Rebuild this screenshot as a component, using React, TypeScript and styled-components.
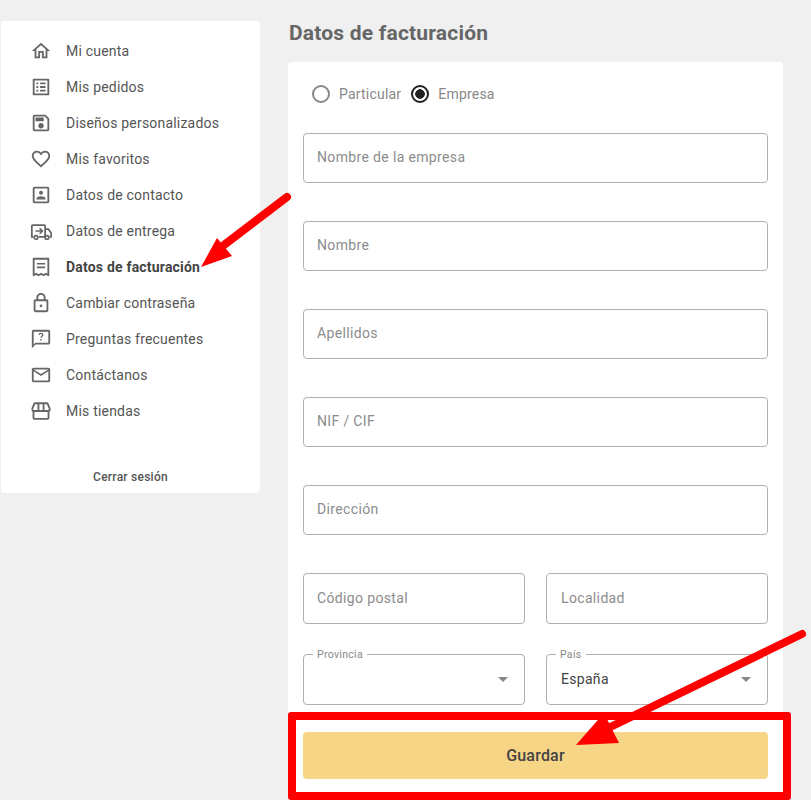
import React from "react";
import styled, { createGlobalStyle } from "styled-components";

const icons: Record<string, React.ReactNode> = {
  home: <path d="M12 5.69l5 4.5V18h-2v-6H9v6H7v-7.81l5-4.5M12 3L2 12h3v8h6v-6h2v6h6v-8h3L12 3z" />,
  orders: (
    <path d="M11 7h6v2h-6zm0 4h6v2h-6zm0 4h6v2h-6zM7 7h2v2H7zm0 4h2v2H7zm0 4h2v2H7zM20.1 3H3.9c-.5 0-.9.4-.9.9v16.2c0 .4.4.9.9.9h16.2c.4 0 .9-.5.9-.9V3.9c0-.5-.5-.9-.9-.9zM19 19H5V5h14v14z" />
  ),
  save: (
    <path d="M17 3H5c-1.11 0-2 .9-2 2v14c0 1.1.89 2 2 2h14c1.1 0 2-.9 2-2V7l-4-4zm2 16H5V5h11.17L19 7.83V19zm-7-7c-1.66 0-3 1.34-3 3s1.34 3 3 3 3-1.34 3-3-1.34-3-3-3zM6 6h9v4H6z" />
  ),
  heart: (
    <path d="M16.5 3c-1.74 0-3.41.81-4.5 2.09C10.91 3.81 9.24 3 7.5 3 4.42 3 2 5.42 2 8.5c0 3.78 3.4 6.86 8.55 11.54L12 21.35l1.45-1.32C18.6 15.36 22 12.28 22 8.5 22 5.42 19.58 3 16.5 3zm-4.4 15.55l-.1.1-.1-.1C7.14 14.24 4 11.39 4 8.5 4 6.5 5.5 5 7.5 5c1.54 0 3.04.99 3.57 2.36h1.87C13.46 5.99 14.96 5 16.5 5c2 0 3.5 1.5 3.5 3.5 0 2.89-3.14 5.74-7.9 10.05z" />
  ),
  contact: (
    <>
      <path d="M19 5v14H5V5h14m0-2H5c-1.11 0-2 .9-2 2v14c0 1.1.89 2 2 2h14c1.1 0 2-.9 2-2V5c0-1.1-.9-2-2-2z" />
      <circle cx="12" cy="9.500" r="2.200" />
      <path d="M7 17v-1c0-1.800 3.300-2.600 5-2.600s5 .8 5 2.600v1z" />
    </>
  ),
  truck: (
    <>
      <path d="M3.500 18.500H2V6.500a1 1 0 0 1 1-1h12.500a1 1 0 0 1 1 1v12H9.500M16.500 10h3.500l3 4v4.500h-1.500" fill="none" stroke="#666" strokeWidth="1.900" />
      <circle cx="6.500" cy="19" r="2" fill="none" stroke="#666" strokeWidth="1.800" />
      <circle cx="18.500" cy="19" r="2" fill="none" stroke="#666" strokeWidth="1.800" />
      <path d="M6 12h7.500M10.500 9l3 3-3 3" fill="none" stroke="#666" strokeWidth="1.800" />
    </>
  ),
  receipt: (
    <>
      <path d="M4 3h16v18l-2.700-1.600-2.600 1.600-2.700-1.600-2.700 1.600-2.600-1.600L4 21z" fill="none" stroke="#666" strokeWidth="2" strokeLinejoin="round" />
      <path d="M7.500 7.500h9v1.800h-9zM7.500 11.500h9v1.800h-9z" />
    </>
  ),
  lock: (
    <path d="M18 8h-1V6c0-2.760-2.240-5-5-5S7 3.240 7 6v2H6c-1.100 0-2 .9-2 2v10c0 1.100.9 2 2 2h12c1.100 0 2-.9 2-2V10c0-1.100-.9-2-2-2zM9 6c0-1.660 1.340-3 3-3s3 1.340 3 3v2H9V6zm9 14H6V10h12v10zm-6-3.500c.83 0 1.500-.67 1.500-1.500s-.67-1.500-1.500-1.500-1.500.67-1.500 1.500.67 1.500 1.500 1.500z" />
  ),
  faq: (
    <>
      <path d="M20 2H4c-1.100 0-2 .9-2 2v18l4-4h14c1.100 0 2-.9 2-2V4c0-1.100-.9-2-2-2zm0 14H6l-2 2V4h16v12z" />
      <path d="M10 7.500c0-1.100.9-1.700 2-1.700s2 .7 2 1.700c0 1.500-2 1.500-2 3" fill="none" stroke="#666" strokeWidth="1.400" />
      <path d="M11.200 12h1.600v1.700h-1.600z" />
    </>
  ),
  mail: (
    <path d="M22 6c0-1.100-.9-2-2-2H4c-1.100 0-2 .9-2 2v12c0 1.100.9 2 2 2h16c1.100 0 2-.9 2-2V6zm-2 0l-8 5-8-5h16zm0 12H4V8l8 5 8-5v10z" />
  ),
  store: (
    <>
      <path d="M5 3.500h14l2.500 6v.500c0 1.400-1.200 2-2.300 2H4.800c-1.100 0-2.300-.6-2.300-2v-.500z" fill="none" stroke="#666" strokeWidth="2" strokeLinejoin="round" />
      <path d="M9.200 3.500v8M14.800 3.500v8M3.800 12v7.500a1 1 0 0 0 1 1h14.400a1 1 0 0 0 1-1V12" fill="none" stroke="#666" strokeWidth="2" />
    </>
  ),
};

const menu = [
  { icon: "home", label: "Mi cuenta" },
  { icon: "orders", label: "Mis pedidos" },
  { icon: "save", label: "Diseños personalizados" },
  { icon: "heart", label: "Mis favoritos" },
  { icon: "contact", label: "Datos de contacto" },
  { icon: "truck", label: "Datos de entrega" },
  { icon: "receipt", label: "Datos de facturación", active: true },
  { icon: "lock", label: "Cambiar contraseña" },
  { icon: "faq", label: "Preguntas frecuentes" },
  { icon: "mail", label: "Contáctanos" },
  { icon: "store", label: "Mis tiendas" },
];

const App = () => {
  return (
    <Page>
      <GlobalStyle />
      <Sidebar>
        <Menu>
          {menu.map((item) => (
            <MenuItem key={item.label} $active={item.active}>
              <MenuIcon viewBox="0 0 24 24">{icons[item.icon]}</MenuIcon>
              {item.label}
            </MenuItem>
          ))}
        </Menu>
        <Logout>Cerrar sesión</Logout>
      </Sidebar>
      <Main>
        <Title>Datos de facturación</Title>
        <Panel>
          <RadioRow>
            <RadioOption>
              <RadioCircle />
              Particular
            </RadioOption>
            <RadioOption>
              <RadioCircle $checked />
              Empresa
            </RadioOption>
          </RadioRow>
          <Input placeholder="Nombre de la empresa" />
          <Input placeholder="Nombre" />
          <Input placeholder="Apellidos" />
          <Input placeholder="NIF / CIF" />
          <Input placeholder="Dirección" />
          <TwoColumns>
            <TallInput placeholder="Código postal" />
            <TallInput placeholder="Localidad" />
          </TwoColumns>
          <SelectRow>
            <SelectBox>
              <SelectLabel>Provincia</SelectLabel>
              <Caret />
            </SelectBox>
            <SelectBox>
              <SelectLabel>País</SelectLabel>
              España
              <Caret />
            </SelectBox>
          </SelectRow>
          <SaveButton>Guardar</SaveButton>
        </Panel>
      </Main>
      <Highlight />
      <Arrows viewBox="0 0 811 800">
        <path d="M287 197L224 245" stroke="#ff0000" strokeWidth="8" strokeLinecap="round" />
        <polygon points="201,267 217,238 232,256" fill="#ff0000" />
        <path d="M802 634L600 732" stroke="#ff0000" strokeWidth="8" strokeLinecap="round" />
        <polygon points="576,745 604,713 619,743" fill="#ff0000" />
      </Arrows>
    </Page>
  );
};

export default App;

const GlobalStyle = createGlobalStyle`
  html, body {
    margin: 0;
    height: 100%;
    overflow: hidden;
    background-color: #f0f0f0;
  }
  * {
    box-sizing: border-box;
  }
`;

const Page = styled.div`
  position: relative;
  width: 811px;
  height: 800px;
  overflow: hidden;
  display: flex;
  align-items: flex-start;
  gap: 28px;
  padding-left: 1px;
  font-family: Roboto, "Liberation Sans", sans-serif;
`;

const Sidebar = styled.aside`
  width: 259px;
  margin-top: 21px;
  padding: 12px 0 4px;
  background-color: #ffffff;
  border-radius: 4px;
`;

const Menu = styled.div`
  display: flex;
  flex-direction: column;
`;

const MenuItem = styled.div<{ $active?: boolean }>`
  display: flex;
  align-items: center;
  gap: 14px;
  height: 36px;
  padding-left: 29px;
  font-size: 14px;
  letter-spacing: 0.2px;
  color: ${(props) => (props.$active ? "#444444" : "#555555")};
  font-weight: ${(props) => (props.$active ? 700 : 400)};
`;

const MenuIcon = styled.svg`
  width: 22px;
  height: 22px;
  flex-shrink: 0;
  fill: #666666;
`;

const Logout = styled.div`
  margin-top: 36px;
  height: 24px;
  line-height: 24px;
  text-align: center;
  font-size: 12px;
  font-weight: 500;
  letter-spacing: 0.25px;
  color: #555555;
`;

const Main = styled.main`
  width: 495px;
`;

const Title = styled.h1`
  margin: 0;
  height: 62px;
  padding: 21px 0 0 1px;
  font-size: 21px;
  line-height: 24px;
  font-weight: 700;
  letter-spacing: 0.2px;
  color: #666666;
`;

const Panel = styled.section`
  display: flex;
  flex-direction: column;
  gap: 38px;
  height: 760px;
  padding: 0 15px;
  background-color: #ffffff;
  border-radius: 4px 4px 0 0;
`;

const RadioRow = styled.div`
  display: flex;
  align-items: center;
  gap: 10px;
  height: 33px;
  margin-top: 15px;
  margin-bottom: -15px;
  padding-left: 9px;
`;

const RadioOption = styled.label`
  display: flex;
  align-items: center;
  gap: 9px;
  font-size: 14px;
  letter-spacing: 0.2px;
  color: #888888;
`;

const RadioCircle = styled.span<{ $checked?: boolean }>`
  width: 18px;
  height: 18px;
  border-radius: 50%;
  border: 2px solid ${(props) => (props.$checked ? "#222222" : "#888888")};
  background: ${(props) =>
    props.$checked ? "radial-gradient(circle, #222222 0 4.5px, transparent 5px)" : "transparent"};
`;

const Input = styled.input`
  width: 100%;
  height: 50px;
  padding: 0 13px 2px;
  border: 1px solid #b0b0b0;
  border-radius: 4px;
  outline: none;
  background: #ffffff;
  font-family: inherit;
  font-size: 14px;
  letter-spacing: 0.35px;
  color: #444444;

  &::placeholder {
    color: #8c8c8c;
    opacity: 1;
  }
`;

const TallInput = styled(Input)`
  height: 51px;
  padding-bottom: 1px;

  &:last-child {
    padding-left: 14px;
  }
`;

const TwoColumns = styled.div`
  display: grid;
  grid-template-columns: 222px 222px;
  gap: 21px;
`;

const SelectRow = styled(TwoColumns)`
  margin-top: -8px;
`;

const SelectBox = styled.div`
  position: relative;
  display: flex;
  align-items: center;
  height: 51px;
  padding: 0 14px 2px;
  border: 1px solid #b0b0b0;
  border-radius: 4px;
  font-size: 14px;
  letter-spacing: 0.3px;
  color: #444444;
`;

const SelectLabel = styled.span`
  position: absolute;
  top: -7px;
  left: 9px;
  padding: 0 4px;
  background: #ffffff;
  font-size: 10.500px;
  line-height: 13px;
  color: #888888;
`;

const Caret = styled.span`
  position: absolute;
  top: 22px;
  right: 16px;
  width: 0;
  height: 0;
  border-left: 5px solid transparent;
  border-right: 5px solid transparent;
  border-top: 5px solid #888888;
`;

const SaveButton = styled.button`
  height: 47px;
  margin-top: -11px;
  border: none;
  border-radius: 4px;
  background-color: #f6d586;
  font-family: inherit;
  font-size: 16px;
  font-weight: 500;
  letter-spacing: 0.2px;
  color: #444444;
`;

const Highlight = styled.div`
  position: absolute;
  left: 288px;
  top: 712px;
  width: 503px;
  height: 88px;
  border: 8px solid #ff0000;
  border-radius: 3px;
`;

const Arrows = styled.svg`
  position: absolute;
  inset: 0;
  width: 811px;
  height: 800px;
`;
